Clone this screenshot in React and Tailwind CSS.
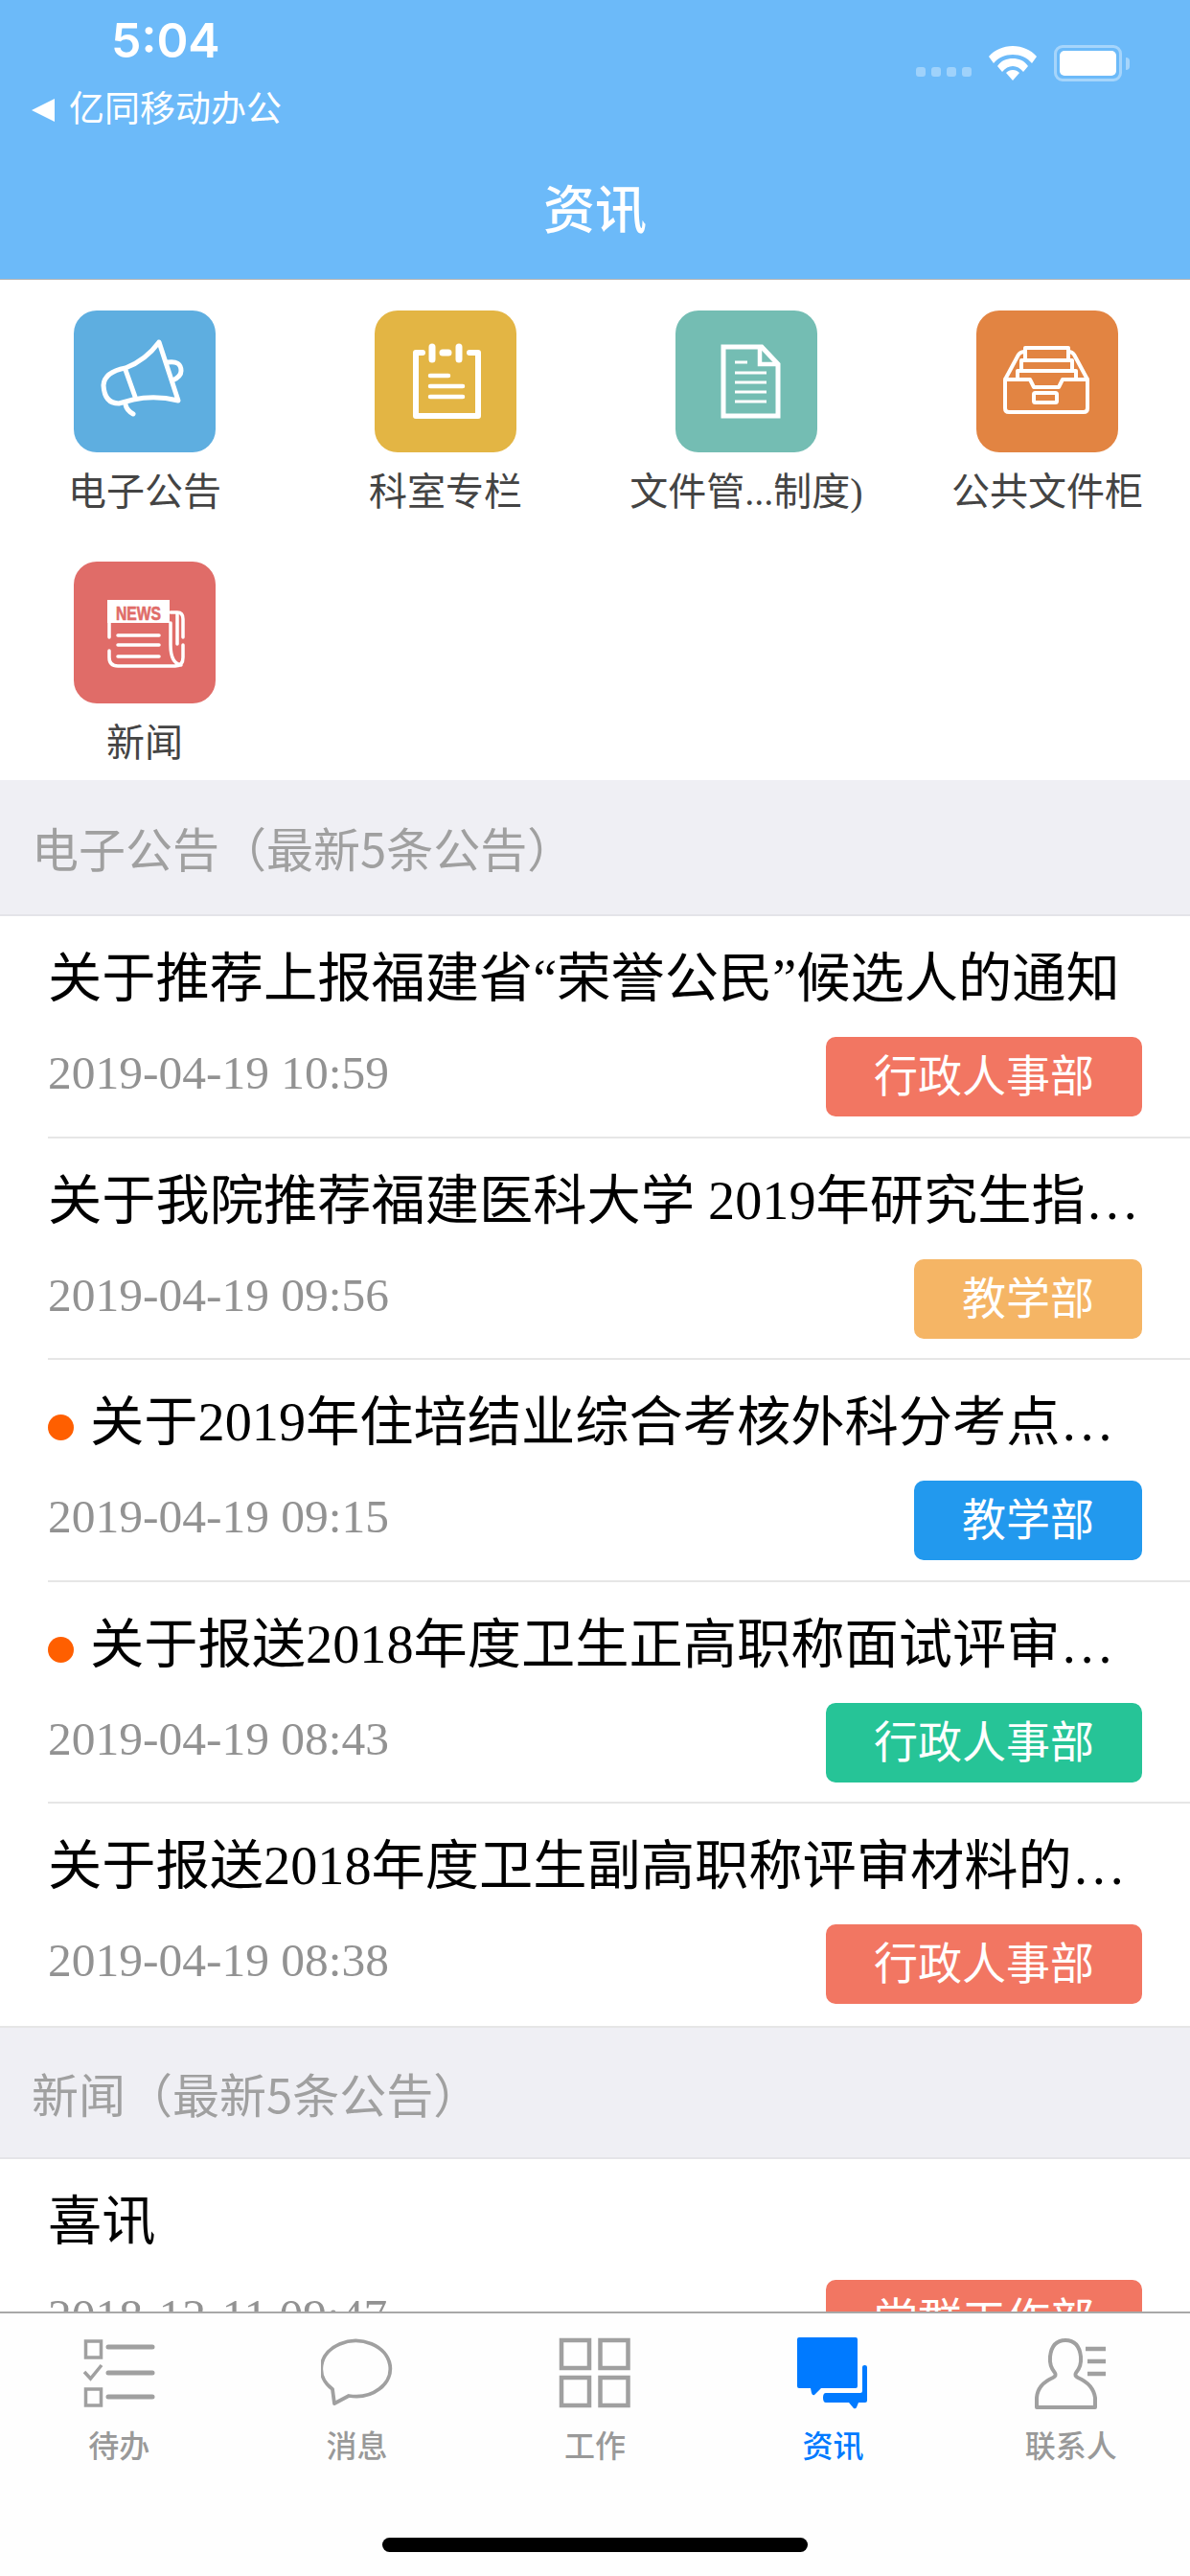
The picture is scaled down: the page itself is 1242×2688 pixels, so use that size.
const tabs = [
  { name: "待办", icon: TodoIcon },
  { name: "消息", icon: ChatIcon },
  { name: "工作", icon: GridIcon },
  { name: "资讯", icon: NewsTabIcon, active: true },
  { name: "联系人", icon: ContactIcon },
];

const shortcuts = [
  { name: "电子公告", bg: "bg-[#5eaee0]", icon: MegaphoneIcon },
  { name: "科室专栏", bg: "bg-[#e3b544]", icon: NotebookIcon },
  { name: "文件管...制度)", bg: "bg-[#74bdb3]", icon: DocumentIcon },
  { name: "公共文件柜", bg: "bg-[#e28442]", icon: InboxIcon },
  { name: "新闻", bg: "bg-[#e06c68]", icon: NewspaperIcon },
];

const notices = [
  { title: "关于推荐上报福建省“荣誉公民”候选人的通知", date: "2019-04-19 10:59", dept: "行政人事部", color: "bg-[#f27662]" },
  { title: "关于我院推荐福建医科大学 2019年研究生指导教师遴选的通知", date: "2019-04-19 09:56", dept: "教学部", color: "bg-[#f5b565]" },
  { title: "关于2019年住培结业综合考核外科分考点安排的通知", date: "2019-04-19 09:15", dept: "教学部", color: "bg-[#2299ee]", unread: true },
  { title: "关于报送2018年度卫生正高职称面试评审材料的通知", date: "2019-04-19 08:43", dept: "行政人事部", color: "bg-[#26c497]", unread: true },
  { title: "关于报送2018年度卫生副高职称评审材料的通知", date: "2019-04-19 08:38", dept: "行政人事部", color: "bg-[#f27662]" },
];

function MegaphoneIcon() {
  return (
    <svg viewBox="0 0 148 148" className="w-full h-full" fill="none" stroke="white" strokeWidth="5" strokeLinecap="round" strokeLinejoin="round">
      <path d="M89 33 Q75 52 54 60 Q32 64 31 78 Q32 97 47 97 L62 93 Q85 88 109 94 Z" />
      <path d="M54 62 L64 90" />
      <path d="M54 98 Q55 104 62 108" />
      <path d="M98 54 Q112 52 112 63 Q112 69 103 73" />
    </svg>
  );
}

function NotebookIcon() {
  return (
    <svg viewBox="0 0 148 148" className="w-full h-full" fill="none" stroke="white" strokeLinecap="round" strokeLinejoin="round">
      <path d="M50 44 H43 V110 H108 V44 H99" strokeWidth="6" />
      <path d="M60 38 V51 M88 38 V51 M71 44 H77" strokeWidth="7" />
      <path d="M58 68 H77 M58 79 H92 M58 90 H92" strokeWidth="4.5" />
    </svg>
  );
}

function DocumentIcon() {
  return (
    <svg viewBox="0 0 148 148" className="w-full h-full" fill="none" stroke="white" strokeWidth="4.5">
      <path d="M50 38 H90 L107 56 V110 H50 Z" strokeWidth="5" />
      <path d="M88 38 V56 H107" />
      <path d="M62 54 H75 M62 65 H95 M62 75 H95 M62 85 H95 M62 95 H95" strokeWidth="3" />
    </svg>
  );
}

function InboxIcon() {
  return (
    <svg viewBox="0 0 148 148" className="w-full h-full" fill="none" stroke="white" strokeWidth="4" strokeLinejoin="round">
      <path d="M30 72 H56 L60 80 H86 L90 72 H116 V102 Q116 106 112 106 H34 Q30 106 30 102 Z" />
      <rect x="60" y="86" width="24" height="10" rx="1.5" />
      <path d="M51 50 V39 H96 V50" />
      <path d="M47 62 V52 H100 V62" />
      <path d="M30 72 L44 46 Q46 43 51 43 M116 72 L102 46 Q100 43 96 43" />
      <path d="M43 71 V63 H104 V71" />
    </svg>
  );
}

function NewspaperIcon() {
  return (
    <svg viewBox="0 0 148 148" className="w-full h-full" fill="none" stroke="white" strokeLinecap="round">
      <rect x="35" y="40" width="65" height="24" fill="white" stroke="none" />
      <text x="44" y="61" fill="#e06c68" stroke="#e06c68" strokeWidth="0.6" fontFamily="Liberation Sans" fontWeight="700" fontSize="19.5" textLength="47" lengthAdjust="spacingAndGlyphs">NEWS</text>
      <path d="M46 77 H89 M46 87 H89 M46 99 H89" strokeWidth="3.5" />
      <path d="M37 64 V79 M37 93 V100 Q37 109 46 109 H106 Q114 109 114 100 V87 M114 79 V60 Q114 53 108 53 H101 M101 64 V87 Q101 106 112 108 M108 54 V86" strokeWidth="3.5" />
    </svg>
  );
}

function TodoIcon() {
  return (
    <svg viewBox="0 0 76 76" className="w-full h-full" fill="none" stroke="#a0a0a0">
      <rect x="3.5" y="5" width="16" height="17" strokeWidth="3.5" />
      <rect x="3.5" y="55" width="16" height="17" strokeWidth="3.5" />
      <path d="M2 37 L8.5 44 L20 30" strokeWidth="3.5" />
      <path d="M27 11 H73 M27 38 H73 M27 63 H73" strokeWidth="5" strokeLinecap="round" />
    </svg>
  );
}

function ChatIcon() {
  return (
    <svg viewBox="0 0 76 76" className="w-full h-full" fill="none" stroke="#a0a0a0" strokeWidth="3.8" strokeLinejoin="round">
      <path d="M12 55 A36 29 0 1 1 29 62 L14 70 Z" />
    </svg>
  );
}

function GridIcon() {
  return (
    <svg viewBox="0 0 76 76" className="w-full h-full" fill="none" stroke="#a0a0a0" strokeWidth="4.5">
      <rect x="3" y="4" width="29" height="29" />
      <rect x="43.5" y="4" width="29" height="29" />
      <rect x="3" y="43" width="29" height="29" />
      <rect x="43.5" y="43" width="29" height="29" />
    </svg>
  );
}

function NewsTabIcon() {
  return (
    <svg viewBox="0 0 76 76" className="w-full h-full" fill="#007aff">
      <path d="M3 1 H62 Q64 1 64 3 V52 Q64 54 62 54 H26 L19 61 Q17 62 16 59 L15 54 H3 Q1 54 1 52 V3 Q1 1 3 1 Z" />
      <path d="M69 32 Q69 30 71.5 30 Q74 30 74 32 V67 Q74 69 72 69 H65 L63 74 Q62 76 60 75 L55 69 H31 Q28 69 28 64 Q28 59 31 59 H67 Q69 59 69 57 Z" />
    </svg>
  );
}

function ContactIcon() {
  return (
    <svg viewBox="0 0 76 76" className="w-full h-full" fill="none" stroke="#a0a0a0" strokeWidth="4" strokeLinejoin="round">
      <path d="M2 74 V64 Q3 50 19 43 Q23 41 21 38 Q15 31 16 21 Q18 4 32 4 Q46 4 48 21 Q49 31 43 38 Q41 41 45 43 Q61 50 63 64 V74 Z" />
      <path d="M53 13 H74 M55 26 H74 M55 39 H74" strokeWidth="4.5" />
    </svg>
  );
}

function StatusIcons() {
  return (
    <div className="flex items-center mt-[47px] h-[38px]">
      <div className="flex gap-[6px] mt-[17px] mr-[18px]">
        <div className="w-[10px] h-[10px] rounded-[3px] bg-white/35" />
        <div className="w-[10px] h-[10px] rounded-[3px] bg-white/35" />
        <div className="w-[10px] h-[10px] rounded-[3px] bg-white/35" />
        <div className="w-[10px] h-[10px] rounded-[3px] bg-white/35" />
      </div>
      <svg viewBox="0 0 50 36" className="w-[50px] h-[36px] mr-[18px]" fill="white">
        <path d="M25 0 C35 0 44 4 50 11 L45 18 C40 12 33 9 25 9 C17 9 10 12 5 18 L0 11 C6 4 15 0 25 0 Z" />
        <path d="M25 13 C31 13 37 15 41 21 L36 27 C33 23 29 21 25 21 C21 21 17 23 14 27 L9 21 C13 15 19 13 25 13 Z" />
        <path d="M25 25 C28 25 30 26 32 28 L25 36 L18 28 C20 26 22 25 25 25 Z" />
      </svg>
      <div className="w-[71px] h-[38px] rounded-[9px] border-[3px] border-white/40 p-[3px]">
        <div className="w-full h-full rounded-[5px] bg-white" />
      </div>
      <div className="w-[4px] h-[13px] ml-[4px] rounded-r-full bg-white/40" />
    </div>
  );
}

function Header() {
  return (
    <div className="bg-[#6cbaf9] h-[292px] shrink-0 border-b border-[#b5b5b5] text-white">
      <div className="flex justify-between pr-[63px]">
        <div>
          <div className="pl-[116px] pt-[13px] h-[88px] text-[50px] leading-[58px] font-semibold" style={{ fontFamily: "Inter, sans-serif" }}>5:04</div>
          <div className="flex items-center pl-[33px] h-[48px] mt-[3px]">
            <svg viewBox="0 0 24 24" className="w-[24px] h-[24px] mr-[15px]" fill="white">
              <path d="M24 0 V24 L0 12 Z" />
            </svg>
            <span className="text-[37px] leading-[48px]">亿同移动办公</span>
          </div>
        </div>
        <StatusIcons />
      </div>
      <div className="text-center text-[54px] leading-[60px] mt-[52px] font-medium">资讯</div>
    </div>
  );
}

function ShortcutGrid() {
  return (
    <div className="grid grid-cols-[repeat(4,300px)] gap-x-[14px] gap-y-[34px] pl-px pt-[32px] bg-white">
      {shortcuts.map((item) => {
        const Icon = item.icon;
        return (
          <div key={item.name} className="h-[228px] flex flex-col items-center">
            <div className={`w-[148px] h-[148px] rounded-[24px] ${item.bg}`}>
              <Icon />
            </div>
            <div className="mt-[17px] text-[40px] leading-[50px] text-[#444] whitespace-nowrap">{item.name}</div>
          </div>
        );
      })}
    </div>
  );
}

function SectionHeader({ title, indent, height }) {
  return (
    <div
      className={`bg-[#efeff4] border-b-2 border-[#e4e4e8] flex items-center text-[49px] text-[#a0a0a0] ${indent} ${height}`}
      style={{ fontFamily: '"Noto Sans CJK SC", sans-serif' }}
    >
      {title}
    </div>
  );
}

function NoticeRow({ item, last }) {
  return (
    <div className={`ml-[50px] pr-[50px] h-[231.6px] pt-[37px] ${last ? "" : "border-b-2 border-[#e6e6e6]"}`}>
      <div className="flex items-center h-[56px]">
        {item.unread && <div className="w-[27px] h-[27px] rounded-full bg-[#ff5f00] shrink-0 mr-[17px] mt-[11px]" />}
        <div className="min-w-0 flex-1 truncate text-[56.25px] leading-[70px] text-black">{item.title}</div>
      </div>
      <div className="flex justify-between items-start mt-[33px]">
        <div className="text-[49.5px] leading-[56px] mt-[10px] text-[#929292]">{item.date}</div>
        <div className={`h-[83px] px-[50px] rounded-[10px] flex items-center text-[46px] text-white ${item.color}`}>{item.dept}</div>
      </div>
    </div>
  );
}

function TabBar() {
  return (
    <div className="h-[276px] shrink-0 bg-[#fefefe] border-t-2 border-[#a8a8a8]">
      <div className="grid grid-cols-5 pt-[24px]">
        {tabs.map((tab) => {
          const Icon = tab.icon;
          return (
            <div key={tab.name} className="flex flex-col items-center">
              <div className="w-[76px] h-[76px]">
                <Icon />
              </div>
              <div className={`mt-[19px] text-[32px] leading-[40px] font-medium ${tab.active ? "text-[#007aff]" : "text-[#999]"}`}>{tab.name}</div>
            </div>
          );
        })}
      </div>
      <div className="w-[444px] h-[15px] mx-auto mt-[75px] rounded-full bg-black" />
    </div>
  );
}

export default function App() {
  return (
    <div
      className="w-[1242px] h-[2688px] flex flex-col overflow-hidden bg-white"
      style={{ fontFamily: '"Liberation Serif", "Noto Sans CJK SC", serif' }}
    >
      <Header />
      <div className="flex-1 min-h-0 overflow-hidden">
        <ShortcutGrid />
        <SectionHeader title="电子公告（最新5条公告）" indent="pl-[33px]" height="h-[142px]" />
        {notices.map((item, i) => (
          <NoticeRow key={item.date} item={item} last={i === notices.length - 1} />
        ))}
        <div className="border-t-2 border-[#e6e6e6]" />
        <SectionHeader title="新闻（最新5条公告）" indent="pl-[33px]" height="h-[137px]" />
        <NoticeRow item={{ title: "喜讯", date: "2018-12-11 09:47", dept: "党群工作部", color: "bg-[#f27662]" }} last />
      </div>
      <TabBar />
    </div>
  );
}
